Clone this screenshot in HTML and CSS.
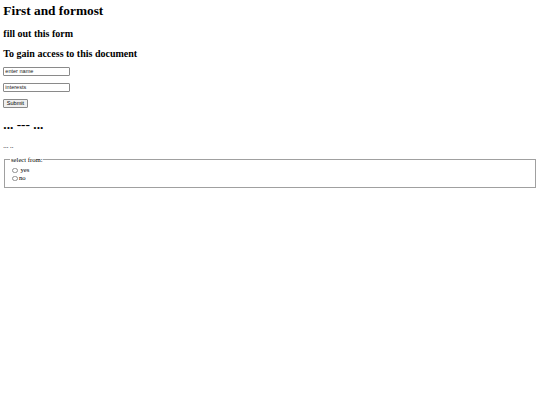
FILE: index.html
```html
<!DOCTYPE html>
<html>
<head>
<meta charset="utf-8">
<link rel="stylesheet" href="styles.css">
</head>
<body class="page">
<h1 class="title title-first">First and formost</h1>
<h2 class="sub">fill out this form</h2>
<h2 class="sub">To gain access to this document</h2>
<form class="form">
<p class="row"><input class="field" type="text" value="enter name"></p>
<p class="row"><input class="field" type="text" value="interests"></p>
<p class="row"><button class="btn" type="button">Submit</button></p>
</form>
<h1 class="title">... --- ...</h1>
<p class="note">... ..</p>
<fieldset class="group">
<legend class="legend">select from:</legend>
<div class="opt"><span class="radio"></span> yes</div>
<div class="opt"><span class="radio"></span>no</div>
</fieldset>
</body>
</html>
```

FILE: styles.css
```css
html { background: #fff; }
.page {
  margin: 3.33px;
  font-family: "Liberation Serif", "Times New Roman", serif;
  font-size: 6.667px;
  color: #000;
}
.title {
  font-size: 13.333px;
  font-weight: bold;
  margin: 8.93px 0;
}
.title-first { margin-top: 0; }
.sub {
  font-size: 10px;
  font-weight: bold;
  margin: 8.3px 0;
}
.form { margin: 0; }
.row { margin: 6.667px 0; height: 9.4px; line-height: 0; }
.field {
  box-sizing: border-box;
  width: 66.5px;
  height: 8.75px;
  padding: 0 1px;
  margin: 0;
  border: 0.5px solid #8a8a8a;
  border-radius: 1px;
  font-family: "Liberation Sans", Arial, sans-serif;
  font-size: 5.556px;
  color: #222;
  background: #fff;
  vertical-align: top;
}
.btn {
  box-sizing: border-box;
  height: 8.75px;
  padding: 0 2.5px;
  margin: 0;
  border: 0.5px solid #8a8a8a;
  border-radius: 1px;
  background: #efefef;
  font-family: "Liberation Sans", Arial, sans-serif;
  font-size: 5.556px;
  color: #000;
  line-height: 1;
  vertical-align: top;
}
.note { margin: 6.667px 0; }
.group {
  margin: 0 0.83px;
  padding: 3.6px 5px 4.6px;
  border: 0.85px solid #a0a0a0;
}
.legend { padding: 0 0.83px; }
.opt { white-space: nowrap; height: 8px; line-height: 8px; }
.radio {
  display: inline-block;
  box-sizing: border-box;
  width: 5.4px;
  height: 5.4px;
  margin: 1.25px 1.25px 0 2.08px;
  border: 0.5px solid #909090;
  border-radius: 50%;
  vertical-align: -0.6px;
}
```
